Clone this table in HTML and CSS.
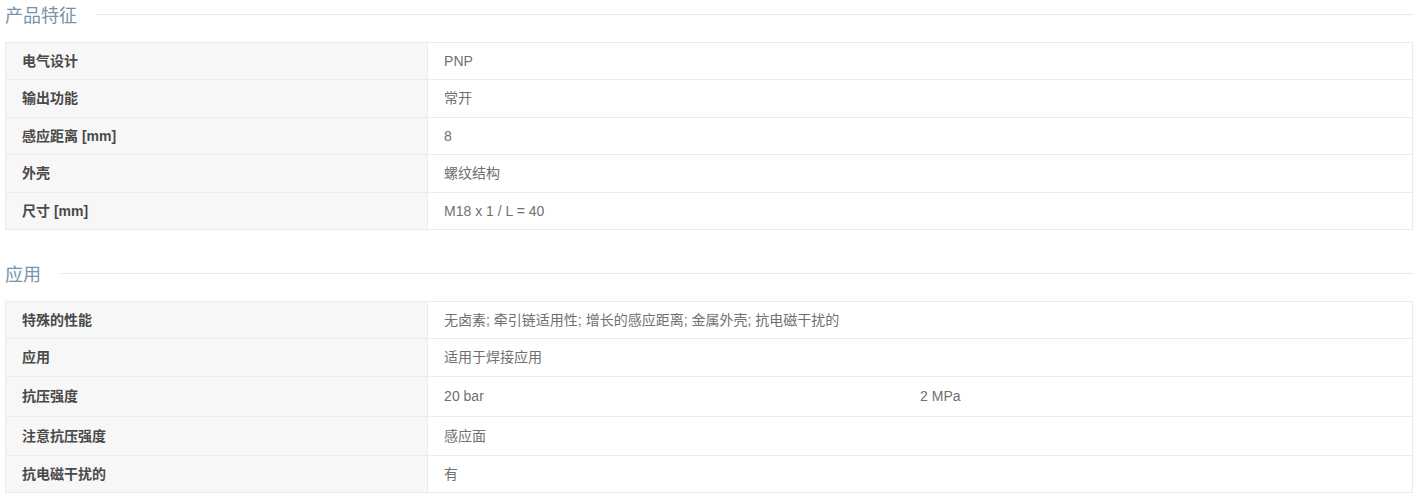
FILE: index.html
```html
<!DOCTYPE html>
<html lang="zh-CN">
<head>
  <meta charset="UTF-8">
  <meta name="viewport" content="width=device-width, initial-scale=1.0">
  <title>产品参数</title>
  <link rel="stylesheet" href="styles.css">
</head>
<body>

  <div class="section">
    <h3 class="section-title"><span>产品特征</span></h3>
    <table class="spec">
      <tr><td class="key">电气设计</td><td>PNP</td></tr>
      <tr><td class="key">输出功能</td><td>常开</td></tr>
      <tr><td class="key">感应距离 [mm]</td><td>8</td></tr>
      <tr><td class="key">外壳</td><td>螺纹结构</td></tr>
      <tr><td class="key">尺寸 [mm]</td><td>M18 x 1 / L = 40</td></tr>
    </table>
  </div>

  <div class="section">
    <h3 class="section-title"><span>应用</span></h3>
    <table class="spec">
      <tr><td class="key">特殊的性能</td><td>无卤素; 牵引链适用性; 增长的感应距离; 金属外壳; 抗电磁干扰的</td></tr>
      <tr><td class="key">应用</td><td>适用于焊接应用</td></tr>
      <tr class="multi">
        <td class="key">抗压强度</td>
        <td>
          <table class="sub">
            <tr><td>20 bar</td><td>2 MPa</td></tr>
          </table>
        </td>
      </tr>
      <tr class="tall"><td class="key">注意抗压强度</td><td>感应面</td></tr>
      <tr><td class="key">抗电磁干扰的</td><td>有</td></tr>
    </table>
  </div>

</body>
</html>
```

FILE: styles.css
```css
body {
  margin: 0 5px 0 5px;
  font-family: "Liberation Sans", "Noto Sans CJK SC", Arial, sans-serif;
  font-size: 14px;
  color: #707070;
  background: #fff;
}
.section { margin-bottom: 29px; }
.section:last-child { margin-bottom: 0; }
.section-title {
  display: flex;
  align-items: center;
  gap: 20px;
  height: 28px;
  margin: 0 0 14px;
  font-size: 18px;
  font-weight: normal;
  color: #7892a9;
}
.section-title::after {
  content: "";
  flex: 1;
  height: 1px;
  background: #e6e6e6;
}
.spec {
  width: 100%;
  border-collapse: collapse;
  table-layout: fixed;
}
.spec td {
  box-sizing: border-box;
  padding: 10px 16px;
  line-height: 16.4px;
  border: 1px solid #ebebeb;
  vertical-align: middle;
}
.spec td.key {
  width: 30%;
  background: #f7f7f7;
  color: #4a4a4a;
  font-weight: bold;
}
.spec .multi > td { padding-top: 11.3px; padding-bottom: 11.3px; }
.spec .tall > td { padding-top: 10.8px; padding-bottom: 10.8px; }
.sub {
  width: 100%;
  border-collapse: collapse;
  table-layout: fixed;
}
.sub td {
  padding: 0;
  border: none;
  line-height: 16.4px;
}
```
